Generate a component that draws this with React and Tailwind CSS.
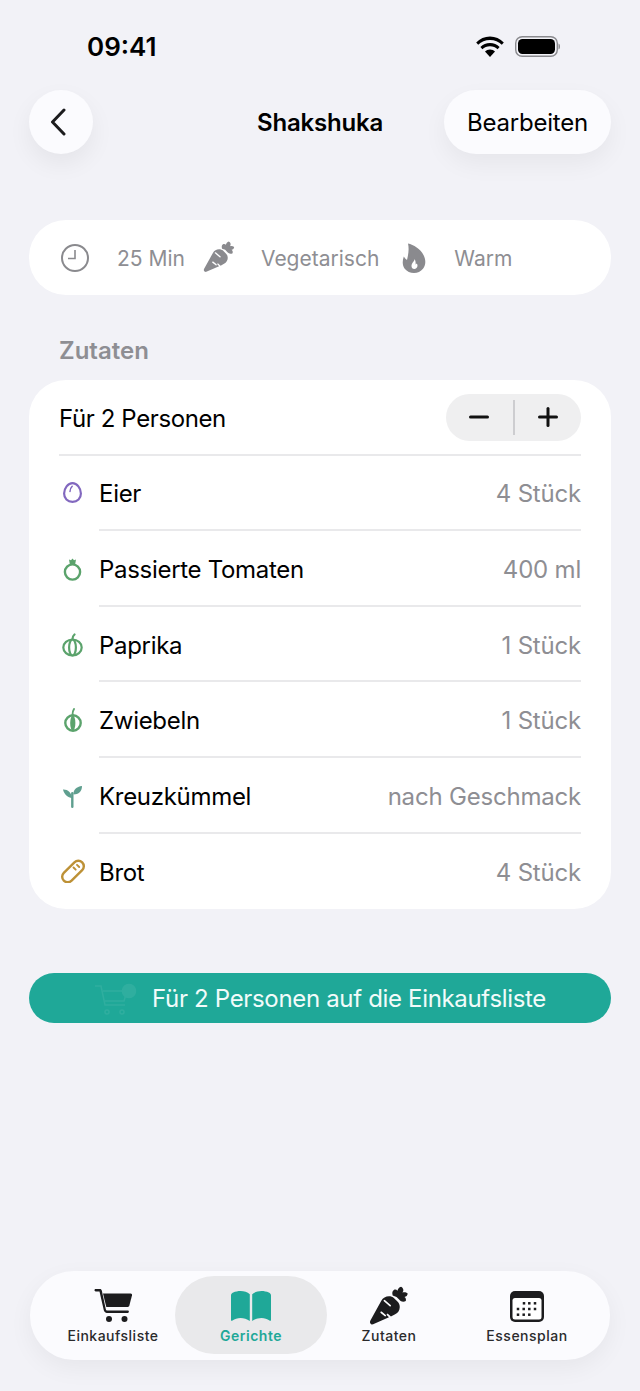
import { useState } from "react";

const ClockIcon = () => (
  <svg width="30" height="30" viewBox="0 0 30 30" fill="none" stroke="#8a8a8e" strokeWidth="2">
    <circle cx="15" cy="15" r="13" />
    <path d="M15 7v8.5H8" strokeWidth="1.6" />
  </svg>
);

const CarrotIcon = ({ color, size = 32 }) => (
  <svg width={size} height={size} viewBox="0 0 32 32">
    <path
      fill={color}
      d="M1.5 29.6c-.9-.8-.9-1.7-.4-2.7L9.6 11.6c1.3-2.4 3.4-3.6 6-3.6 1.500 0 2.900.5 4 1.500l2.600 2.500c1.300 1.300 1.900 2.800 1.800 4.500-.1 2.500-1.300 4.300-3.600 5.600l-3.300 1.800-2.600-2.400-.9.9 2 2-12.400 5.500c-.6.200-1.200.1-1.700-.3z"
    />
    <path
      fill={color}
      d="M18.500 7.500c-.6-1.800-.4-3.400.9-4.300 1-.7 2-.4 2.800.5.300-1.500 1.300-2.800 2.800-3.200 1 .5 1.700 1.300 1.800 2.500.1.800-.2 1.500-.7 2.100 1.300-.6 3-.3 4.100.8-.1 1.600-1.100 2.500-2.500 2.700 1.100.7 1.400 2 1 3.200-1.300.8-2.800.7-4-.1-.5-.3-.9-.7-1.200-1.100l-2-2z"
    />
    <path d="M12 11.500l4.500 3.800M9.500 20.500l3.200 2.600" stroke="#fff" strokeWidth="1.300" strokeLinecap="round" />
  </svg>
);

const FlameIcon = () => (
  <svg width="24" height="30" viewBox="0 0 24 30">
    <path
      fill="#8a8a8e"
      fillRule="evenodd"
      d="M6 .5c5.500 1 12.500 5.500 15.500 11.500 2.500 5 2.500 10-.5 13.800-2.200 2.800-5.500 4.200-9 4.200-3.700 0-7-1.500-9.300-4.300C.3 22.500.2 18 1.800 13.500c.8 1.400 1.900 2.500 3.200 3.500C6.300 11.500 7.300 6 6 .5zM12.500 16c.2 2.200-3 3.800-3 7 0 1.700 1.200 3 2.800 3s3.200-1.300 3.200-3.200c0-.9-.3-1.600-.7-2.200-.3.500-.7.800-1.200 1 .2-2-.1-4-1.100-5.600z"
    />
  </svg>
);

const EggIcon = () => (
  <svg width="24" height="24" viewBox="0 0 24 24" fill="none" stroke="#8268bf" strokeWidth="2.200" strokeLinecap="round">
    <path d="M11.500 2.100c4.500 0 8.400 5.200 8.400 10.400 0 5-3.400 8.400-8.400 8.400s-8.400-3.400-8.400-8.400C3.100 7.300 7 2.100 11.500 2.100z" />
    <path d="M9 10.500c0-2.200.8-4 2.200-5.300" strokeWidth="1.500" />
  </svg>
);

const TomatoIcon = () => (
  <svg width="24" height="24" viewBox="0 0 24 24" fill="none" stroke="#5ba36c" strokeWidth="2.400">
    <circle cx="11.500" cy="15" r="7.600" />
    <path d="M8 2.500 10 3.300l1.500-1.800L13 3.300l2-.8-.8 4.500H8.800z" fill="#5ba36c" stroke="none" />
  </svg>
);

const PepperIcon = () => (
  <svg width="24" height="24" viewBox="0 0 24 24" fill="none" stroke="#5ba36c" strokeWidth="2.200" strokeLinecap="round">
    <ellipse cx="11.500" cy="14.500" rx="9.200" ry="8" />
    <ellipse cx="11.500" cy="14.500" rx="3.400" ry="8" />
    <path d="M11.500 6c0-1.700.6-3.300 2-4.500" />
  </svg>
);

const OnionIcon = () => (
  <svg width="24" height="24" viewBox="0 0 24 24" fill="none" stroke="#5ba36c" strokeWidth="2.400" strokeLinecap="round">
    <circle cx="12" cy="15" r="7.700" />
    <path d="M11.500 7c0-2.200.2-4.200 1.500-6" strokeWidth="1.900" />
    <ellipse cx="11.800" cy="15" rx="2.600" ry="7.500" fill="#5ba36c" stroke="none" />
  </svg>
);

const SproutIcon = () => (
  <svg width="24" height="24" viewBox="0 0 24 24" fill="#5f9f8f">
    <rect x="10.100" y="8" width="2.400" height="16" rx="1.200" />
    <path d="M11 14C7 13.500 3 10.500 2 5.500c4.500-.3 8.500 3 9 8.500z" />
    <path d="M12.500 10.500C12 6 15.500 2.500 21 2c.2 5-3.500 8.500-8.500 8.500z" />
  </svg>
);

const BreadIcon = () => (
  <svg width="24" height="24" viewBox="0 0 24 24" fill="none" stroke="#bd9136" strokeWidth="2.400" strokeLinecap="round">
    <rect x="-1" y="7" width="26" height="11" rx="5.500" transform="rotate(-45 12 12.500)" />
    <path d="M12.500 8.500l2.200 2.200M16 5.800l2.200 2.200" strokeWidth="1.900" />
  </svg>
);

const CartIcon = () => (
  <svg width="39" height="34" viewBox="0 0 38 34" fill="#1c1c1e">
    <path d="M0 1.200C0 .5.500 0 1.200 0h4.300c.9 0 1.600.6 1.800 1.500l4 18.700c.2.800.8 1.300 1.600 1.300h20.300c.7 0 1.200.5 1.200 1.200s-.5 1.200-1.200 1.200H12.400c-1.500 0-2.800-1.100-3.100-2.600L5 2.400H1.200C.5 2.400 0 1.900 0 1.200z" />
    <path d="M8.500 4.500h27.700c.9 0 1.500.8 1.300 1.700l-2.700 10.500c-.2.700-.8 1.200-1.500 1.200H11.800z" />
    <circle cx="14.500" cy="30" r="3" />
    <circle cx="30" cy="30" r="3" />
  </svg>
);

const bookPage =
  "M0 4.500C0 3 .8 2 2.200 1.500 4.500.5 7 0 9.500 0c3.500 0 7 1.200 9.300 3.200V30c-2.800-1.800-6-2.900-9.300-2.900-3 0-5.800.9-8 2.500-.9.6-1.500.2-1.500-.8z";

const BookIcon = () => (
  <svg width="40" height="31" viewBox="0 0 40 31" fill="#1fa898">
    <path d={bookPage} />
    <path d={bookPage} transform="translate(40 0) scale(-1 1)" />
  </svg>
);

const calendarDots = [
  [14, 12.3], [19.3, 12.3], [25, 12.3],
  [8, 18], [13.7, 18], [19.3, 18], [25, 18],
  [8, 23.7], [13.7, 23.7], [19.3, 23.7],
];

const CalendarIcon = () => (
  <svg width="34" height="31" viewBox="0 0 34 31">
    <rect width="34" height="31" rx="5" fill="#1c1c1e" />
    <rect x="2.500" y="7" width="29" height="21.500" rx="2.500" fill="#fff" />
    <g fill="#1c1c1e">
      {calendarDots.map(([x, y]) => (
        <rect key={`${x}-${y}`} x={x - 1.25} y={y - 1.25} width="2.500" height="2.500" />
      ))}
    </g>
  </svg>
);

const ingredients = [
  { name: "Eier", amount: "4 Stück", icon: <EggIcon /> },
  { name: "Passierte Tomaten", amount: "400 ml", icon: <TomatoIcon /> },
  { name: "Paprika", amount: "1 Stück", icon: <PepperIcon /> },
  { name: "Zwiebeln", amount: "1 Stück", icon: <OnionIcon /> },
  { name: "Kreuzkümmel", amount: "nach Geschmack", icon: <SproutIcon /> },
  { name: "Brot", amount: "4 Stück", icon: <BreadIcon /> },
];

const TabItem = ({ icon, label, active }) => (
  <div className="relative flex h-full w-[138px] flex-col items-center pt-[15px]">
    {/* pill is wider than the column */}
    {active && <div className="absolute top-[5px] -right-[7px] -left-[7px] h-[78px] rounded-[39px] bg-[#e9e9eb]" />}
    <div className="relative flex h-[40px] items-center">{icon}</div>
    <span
      className={`relative mt-[1px] text-[14px] leading-[18px] tracking-[0.5px] ${
        active ? "font-semibold text-[#1fa898]" : "font-medium text-[#2a2a2c]"
      }`}
    >
      {label}
    </span>
  </div>
);

const App = () => {
  const [persons, setPersons] = useState(2);

  return (
    <div className="flex h-[1391px] w-[640px] flex-col overflow-hidden bg-[#f2f2f7] font-['Inter',sans-serif] text-black">
      {/* Status bar */}
      <div className="flex h-[90px] items-start justify-between pt-[30px] pr-[80px] pl-[87px]">
        <span className="text-[26px] leading-[34px] font-semibold">09:41</span>
        <div className="flex items-center gap-[11px] pt-[6px]">
          <svg width="28" height="21" viewBox="0 0 28 21">
            <path d="M14 4c4.700 0 8.800 1.800 11.800 4.700l2-2.300C24.200 2.800 19.300.6 14 .6S3.800 2.800.2 6.400l2 2.300C5.200 5.800 9.300 4 14 4z" />
            <path d="M14 10.200c3 0 5.700 1.200 7.600 3l2-2.300C21.100 8.400 17.700 7 14 7S6.900 8.400 4.400 10.900l2 2.300c1.900-1.800 4.600-3 7.600-3z" />
            <path d="M14 13.500c-2 0-3.800.8-5 2l5 5.500 5-5.500c-1.200-1.200-3-2-5-2z" />
          </svg>
          <svg width="45" height="21" viewBox="0 0 45 21">
            <rect x=".7" y=".7" width="41.600" height="19.600" rx="6.500" fill="none" stroke="#8a8a8e" strokeWidth="1.400" />
            <rect x="3" y="3" width="37" height="15" rx="4.500" />
            <path d="M43.500 7.500c1 .4 1.500 1.500 1.500 3s-.5 2.600-1.500 3z" fill="#8a8a8e" />
          </svg>
        </div>
      </div>

      {/* Nav */}
      <div className="relative flex items-center justify-between pr-[29px] pl-[29px]">
        <button className="flex h-[64px] w-[64px] items-center justify-center rounded-full bg-[#fbfbfe] pr-[7px] shadow-[0_10px_24px_rgba(0,0,0,0.06)]">
          <svg width="18" height="28" viewBox="0 0 18 28" fill="none" stroke="#1c1c1e" strokeWidth="3" strokeLinecap="round" strokeLinejoin="round">
            <path d="M15 2 3.500 14 15 26" />
          </svg>
        </button>
        <h1 className="absolute left-0 w-full pt-[2px] text-center text-[24px] font-semibold tracking-[-0.2px]">Shakshuka</h1>
        <button className="z-10 flex h-[64px] w-[167px] items-center justify-center rounded-[32px] bg-[#fbfbfe] pt-[2px] text-[24px] tracking-[-0.2px] shadow-[0_10px_24px_rgba(0,0,0,0.05)]">
          Bearbeiten
        </button>
      </div>

      {/* Meta */}
      <div className="mx-[29px] mt-[66px] flex h-[75px] items-center rounded-[37px] bg-white pl-[31px] text-[21px] text-[#8e8e93]">
        <ClockIcon />
        <span className="ml-[27px] pt-[2px]">25 Min</span>
        <div className="ml-[18px]">
          <CarrotIcon color="#8a8a8e" size={33} />
        </div>
        <span className="ml-[25px] pt-[2px]">Vegetarisch</span>
        <div className="ml-[23px]">
          <FlameIcon />
        </div>
        <span className="ml-[28px] pt-[2px]">Warm</span>
      </div>

      <h2 className="mt-[41px] ml-[59px] text-[24px] leading-[30px] font-semibold text-[#8e8e93]">Zutaten</h2>

      {/* Ingredients */}
      <div className="mx-[29px] mt-[14px] rounded-[37px] bg-white pr-[30px] pl-[30px]">
        <div className="flex h-[75.6px] items-center justify-between border-b-2 border-[#e9e9eb]">
          <span className="pt-[4px] text-[24px] tracking-[-0.4px]">Für {persons} Personen</span>
          <div className="mt-[1px] flex h-[47px] w-[135px] items-center rounded-[24px] bg-[#efeff0]">
            <button onClick={() => setPersons((p) => Math.max(1, p - 1))} className="flex h-full flex-1 items-center justify-center">
              <svg width="20" height="4" viewBox="0 0 20 4"><rect y=".5" width="20" height="3" rx="1.500" fill="#111" /></svg>
            </button>
            <div className="h-[35px] w-[2px] bg-[#cdcdd0]" />
            <button onClick={() => setPersons((p) => p + 1)} className="flex h-full flex-1 items-center justify-center">
              <svg width="20" height="20" viewBox="0 0 20 20" fill="#111"><rect y="8.500" width="20" height="3" rx="1.500" /><rect x="8.500" width="3" height="20" rx="1.500" /></svg>
            </button>
          </div>
        </div>
        {ingredients.map((item, i) => (
          <div key={item.name} className="flex h-[75.6px] items-center">
            <div className="flex w-[40px] shrink-0 justify-start pl-[2px]">{item.icon}</div>
            <div
              className={`flex h-full flex-1 items-center justify-between ${
                i < ingredients.length - 1 ? "border-b-2 border-[#e9e9eb]" : ""
              }`}
            >
              <span className="pt-[4px] text-[24px] tracking-[-0.3px]">{item.name}</span>
              <span className="pt-[4px] text-[24px] tracking-[-0.2px] text-[#8e8e93]">{item.amount}</span>
            </div>
          </div>
        ))}
      </div>

      {/* Add to list */}
      <button className="relative mx-[29px] mt-[64px] flex h-[50px] items-center justify-center rounded-[25px] bg-[#1fa898] pt-[2px] pl-[58px] text-[24px] tracking-[-0.33px] text-[#f2fbfa]">
        <svg className="absolute top-[8px] left-[64px] opacity-[0.07]" width="44" height="36" viewBox="0 0 44 36" fill="none" stroke="#fff" strokeWidth="1.500">
          <path d="M2 5h6l4 19h20M10 10h24l-3 10H12" />
          <circle cx="14" cy="31" r="2" />
          <circle cx="29" cy="31" r="2" />
          <circle cx="36" cy="10" r="6.500" fill="#fff" />
        </svg>
        Für {persons} Personen auf die Einkaufsliste
      </button>

      {/* Tab bar */}
      <div className="mx-[30px] mt-auto mb-[31px] flex h-[89px] rounded-[44px] bg-[#fbfbfe] pl-[14px] shadow-[0_8px_24px_rgba(0,0,0,0.05)]">
        <TabItem icon={<CartIcon />} label="Einkaufsliste" />
        <TabItem icon={<BookIcon />} label="Gerichte" active />
        <TabItem icon={<CarrotIcon color="#1c1c1e" size={41} />} label="Zutaten" />
        <TabItem icon={<CalendarIcon />} label="Essensplan" />
      </div>
    </div>
  );
};

export default App;
